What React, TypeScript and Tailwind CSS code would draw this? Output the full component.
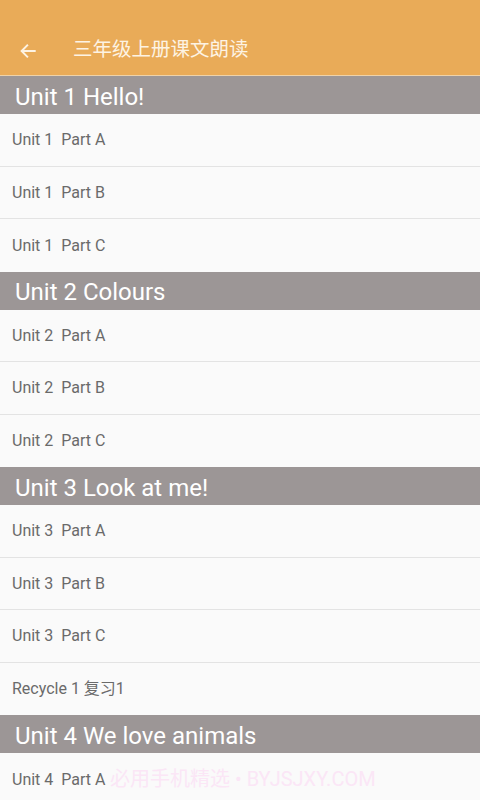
import React from "react";

const sections: { title: string; items: string[] }[] = [
  { title: "Unit 1 Hello!", items: ["Unit 1  Part A", "Unit 1  Part B", "Unit 1  Part C"] },
  { title: "Unit 2 Colours", items: ["Unit 2  Part A", "Unit 2  Part B", "Unit 2  Part C"] },
  { title: "Unit 3 Look at me!", items: ["Unit 3  Part A", "Unit 3  Part B", "Unit 3  Part C", "Recycle 1 复习1"] },
  { title: "Unit 4 We love animals", items: ["Unit 4  Part A"] },
];

export default function App() {
  return (
    <div
      className="w-[480px] h-[800px] overflow-hidden bg-[#fafafa] relative"
      style={{ fontFamily: 'Roboto, "Noto Sans CJK SC", sans-serif' }}
    >
      <div className="h-[76px] bg-[#e9ab58] border-b border-[#efd2a8] flex items-end pb-[12px]">
        <div className="w-[56px] flex justify-center pb-[3px]">
          <svg width="18" height="18" viewBox="0 0 24 24" fill="none" stroke="#fdf3e3" strokeWidth="2.6" strokeLinecap="square">
            <path d="M21 12H4" />
            <path d="M11 4.5L3.5 12L11 19.5" />
          </svg>
        </div>
        <div className="ml-[17px] text-[19.5px] leading-[26px] text-[#fdf3e3]">三年级上册课文朗读</div>
      </div>
      {sections.map((s) => (
        <div key={s.title}>
          <div className="h-[38px] bg-[#9c9696] flex items-center pl-[15px] pt-[3px] text-[24px] text-white whitespace-pre">
            {s.title}
          </div>
          {s.items.map((it, i) => (
            <div
              key={it}
              className={`h-[52.5px] flex items-center pl-[12px] pt-[1px] text-[16px] text-[#6a6a6a] whitespace-pre ${
                i < s.items.length - 1 ? "border-b border-[#e3e3e3]" : ""
              }`}
            >
              {it}
            </div>
          ))}
        </div>
      ))}
      <div className="absolute left-[110px] top-[764px] text-[20px] text-[#fbe6f6] whitespace-pre">
        必用手机精选 • BYJSJXY.COM
      </div>
    </div>
  );
}
